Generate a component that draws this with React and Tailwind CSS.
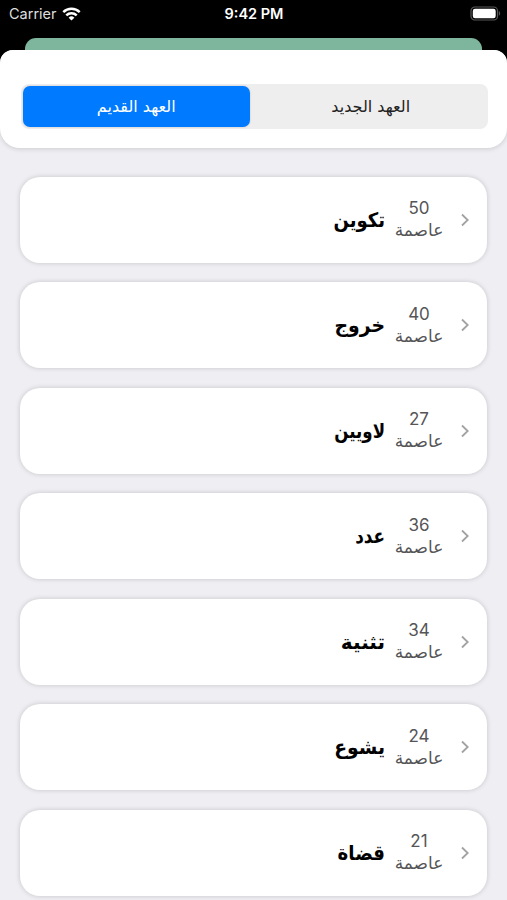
const books = [
  { name: 'تكوين', chapters: 50, fit: 'scale-x-[0.9]' },
  { name: 'خروج', chapters: 40, fit: 'scale-x-[0.94]' },
  { name: 'لاويين', chapters: 27, fit: 'scale-x-[0.83]' },
  { name: 'عدد', chapters: 36, fit: 'scale-x-[0.84]' },
  { name: 'تثنية', chapters: 34, fit: 'scale-x-100' },
  { name: 'يشوع', chapters: 24, fit: 'scale-x-[0.94]' },
  { name: 'قضاة', chapters: 21, fit: 'scale-x-[0.91]' },
];

const WifiIcon = () => (
  <svg width="19" height="14" viewBox="0 0 19 14" fill="none" stroke="white" strokeWidth="2.5">
    <path d="M1.3 5.1a11.7 11.7 0 0 1 16.4 0" />
    <path d="M4.3 8.3a7.4 7.4 0 0 1 10.4 0" />
    <path d="M9.5 13.6 6.6 10.7a4.1 4.1 0 0 1 5.8 0z" fill="white" stroke="none" />
  </svg>
);

const BatteryIcon = () => (
  <svg width="31" height="15" viewBox="0 0 31 15" fill="none">
    <rect x="1" y="1" width="26.5" height="13" rx="3.8" stroke="#59595b" strokeWidth="1.2" />
    <rect x="2.8" y="2.8" width="22.9" height="9.4" rx="2.2" fill="white" />
    <path d="M28.9 5.3c1.6.6 1.6 3.8 0 4.4z" fill="#59595b" />
  </svg>
);

const Chevron = () => (
  <svg width="8" height="14" viewBox="0 0 8 14" fill="none" stroke="#a2a2a4" strokeWidth="1.8">
    <path d="M1 1.5 6.7 7 1 12.5" />
  </svg>
);

const BookCard = ({ book }) => (
  <div className="flex h-[86px] shrink-0 items-center rounded-[20px] bg-white pr-[18px] shadow-[0_0_5px_rgba(0,0,0,0.18)]">
    <h2 dir="rtl" className={`flex-1 origin-right text-[20px] leading-7 font-bold text-black ${book.fit}`}>
      {book.name}
    </h2>
    <div className="ml-[9px] w-[50px] text-center text-[#555557]">
      <div className="font-[Inter,sans-serif] text-[17px] leading-[22px]">{book.chapters}</div>
      <div dir="rtl" className="text-[17px] leading-[23px] whitespace-nowrap">عاصمة</div>
    </div>
    <div className="ml-[17px]">
      <Chevron />
    </div>
  </div>
);

const App = () => {
  return (
    <div className="flex h-[900px] w-[507px] flex-col overflow-hidden bg-black font-['DejaVu_Sans',sans-serif]">
      {/* Status bar */}
      <div className="grid h-[38px] shrink-0 grid-cols-3 items-start pt-[5px] pr-[6px] pl-[9px] font-[Inter,sans-serif] leading-[18px] text-white">
        <div className="flex items-center gap-[5px] text-[14.5px] text-[#dedede]">
          <span>Carrier</span>
          <WifiIcon />
        </div>
        <div className="pr-[2px] text-center text-[14.5px] font-semibold">9:42 PM</div>
        <div className="flex justify-end pt-px">
          <BatteryIcon />
        </div>
      </div>

      {/* Edge of the screen behind the sheet */}
      <div className="mx-[25px] h-3 shrink-0 rounded-t-[11px] bg-[#7eb59d]"></div>

      {/* Sheet */}
      <div className="flex-1 overflow-hidden rounded-t-[13px] bg-[#efeef3]">
        <div className="h-[98px] rounded-b-[20px] bg-white pt-[34px] pr-[19.5px] pl-[20.5px] shadow-[0_1px_5px_rgba(0,0,0,0.15)]">
          <div className="flex h-[45px] rounded-[8px] bg-[#eeeeee] p-[2px] text-[16px]">
            <button className="h-[41px] w-[227.5px] rounded-[7px] bg-[#007aff] text-white shadow-[0_0_2px_rgba(0,0,0,0.2)]">
              العهد القديم
            </button>
            <button className="flex-1 pl-[6px] text-[#222]">العهد الجديد</button>
          </div>
        </div>

        <div className="flex flex-col gap-[19.5px] px-[20px] pt-[28.5px]">
          {books.map((book) => (
            <BookCard key={book.name} book={book} />
          ))}
        </div>
      </div>
    </div>
  );
};

export default App;
